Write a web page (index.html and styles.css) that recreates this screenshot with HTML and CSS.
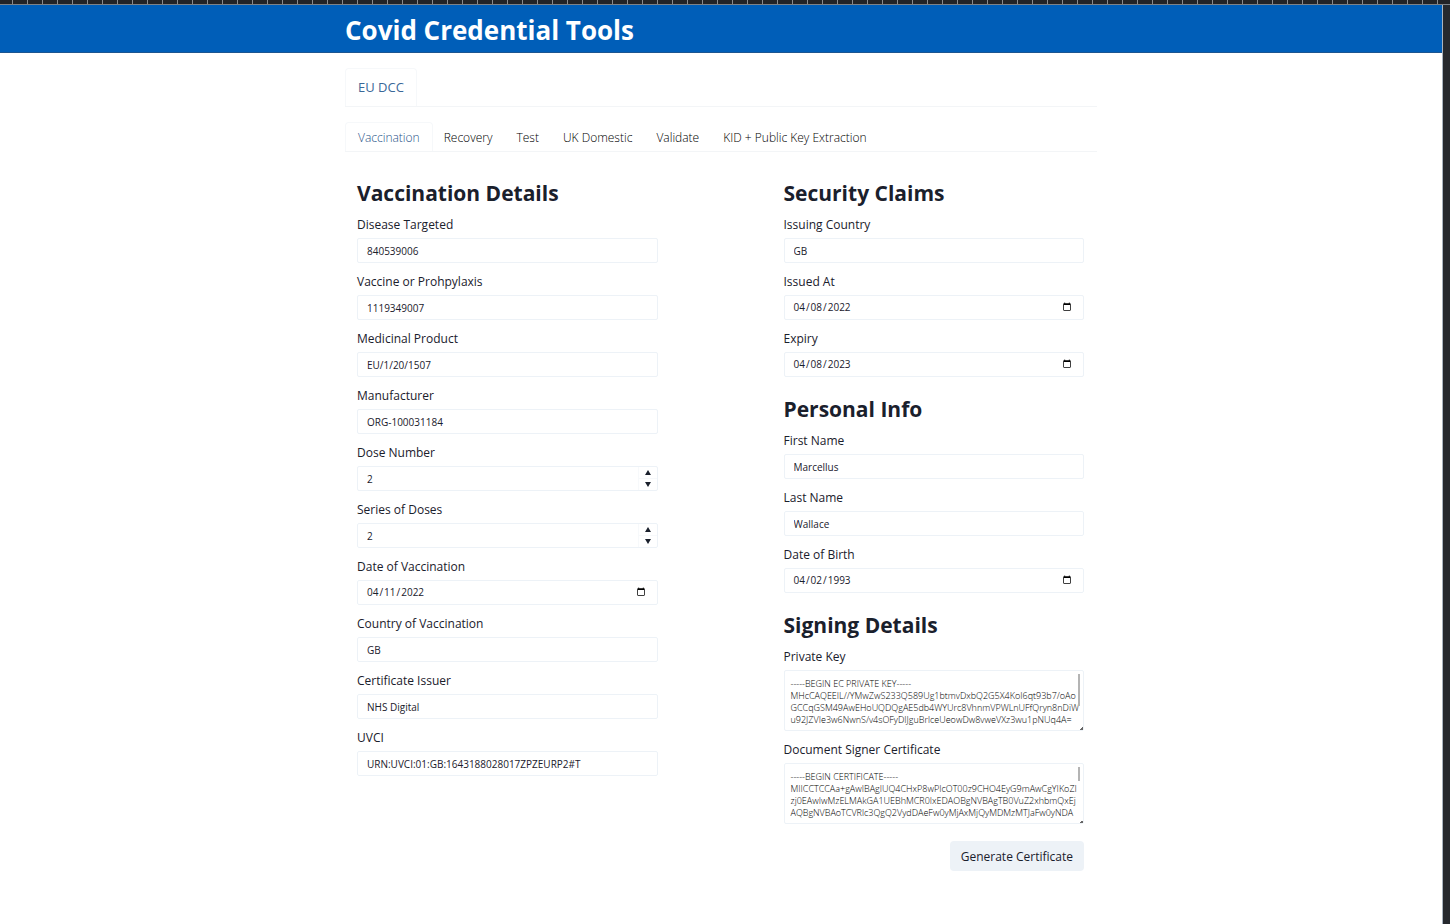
FILE: index.html
```html
<!DOCTYPE html>
<html lang="en">
<head>
<meta charset="utf-8">
<title>Covid Credential Tools</title>
<link rel="stylesheet" href="styles.css">
</head>
<body class="frame">
<div class="ruler"></div>
<div class="page">
  <header class="banner"><h1 class="wrap banner-title">Covid Credential Tools</h1></header>
  <main class="wrap">
    <nav class="tabs tabs-main"><a class="tab active" href="#dcc">EU DCC</a></nav>
    <nav class="tabs tabs-sub">
      <a class="tab active" href="#vaccination">Vaccination</a>
      <a class="tab" href="#recovery">Recovery</a>
      <a class="tab" href="#test">Test</a>
      <a class="tab" href="#domestic">UK Domestic</a>
      <a class="tab" href="#validate">Validate</a>
      <a class="tab" href="#kid">KID + Public Key Extraction</a>
    </nav>
    <form class="columns">
      <div class="column">
        <section class="group">
          <h2 class="heading">Vaccination Details</h2>
          <div class="field"><label for="disease">Disease Targeted</label><input id="disease" class="box" type="text" value="840539006"></div>
          <div class="field"><label for="vaccine">Vaccine or Prohpylaxis</label><input id="vaccine" class="box" type="text" value="1119349007"></div>
          <div class="field"><label for="product">Medicinal Product</label><input id="product" class="box" type="text" value="EU/1/20/1507"></div>
          <div class="field"><label for="maker">Manufacturer</label><input id="maker" class="box" type="text" value="ORG-100031184"></div>
          <div class="field"><label for="dose">Dose Number</label>
            <div class="holder"><input id="dose" class="box" type="number" value="2">
              <div class="stepper"><button class="step" type="button" aria-label="Increase dose number"><svg viewBox="0 0 6 5"><path d="M3 0 6 5H0Z"/></svg></button><button class="step" type="button" aria-label="Decrease dose number"><svg viewBox="0 0 6 5"><path d="M0 0H6L3 5Z"/></svg></button></div></div></div>
          <div class="field"><label for="series">Series of Doses</label>
            <div class="holder"><input id="series" class="box" type="number" value="2">
              <div class="stepper"><button class="step" type="button" aria-label="Increase series of doses"><svg viewBox="0 0 6 5"><path d="M3 0 6 5H0Z"/></svg></button><button class="step" type="button" aria-label="Decrease series of doses"><svg viewBox="0 0 6 5"><path d="M0 0H6L3 5Z"/></svg></button></div></div></div>
          <div class="field"><label for="vdate">Date of Vaccination</label><input id="vdate" class="box" type="date" value="2022-04-11"></div>
          <div class="field"><label for="country">Country of Vaccination</label><input id="country" class="box" type="text" value="GB"></div>
          <div class="field"><label for="issuer">Certificate Issuer</label><input id="issuer" class="box" type="text" value="NHS Digital"></div>
          <div class="field"><label for="uvci">UVCI</label><input id="uvci" class="box" type="text" value="URN:UVCI:01:GB:1643188028017ZPZEURP2#T"></div>
        </section>
      </div>
      <div class="column">
        <section class="group">
          <h2 class="heading">Security Claims</h2>
          <div class="field"><label for="issuing">Issuing Country</label><input id="issuing" class="box" type="text" value="GB"></div>
          <div class="field"><label for="issued">Issued At</label><input id="issued" class="box" type="date" value="2022-04-08"></div>
          <div class="field"><label for="expiry">Expiry</label><input id="expiry" class="box" type="date" value="2023-04-08"></div>
        </section>
        <section class="group">
          <h2 class="heading">Personal Info</h2>
          <div class="field"><label for="first">First Name</label><input id="first" class="box" type="text" value="Marcellus"></div>
          <div class="field"><label for="last">Last Name</label><input id="last" class="box" type="text" value="Wallace"></div>
          <div class="field"><label for="dob">Date of Birth</label><input id="dob" class="box" type="date" value="1993-04-02"></div>
        </section>
        <section class="group">
          <h2 class="heading">Signing Details</h2>
          <div class="field"><label for="key">Private Key</label>
            <div class="holder"><textarea id="key" class="box area" wrap="off">-----BEGIN EC PRIVATE KEY-----
MHcCAQEEIL//YMwZwS233Q589Ug1btmvDxbQ2G5X4KoI6qt93b7/oAo
GCCqGSM49AwEHoUQDQgAE5db4WYUrc8VhnmVPWLnUFfQryn8nDiW
u92JZVIe3w6NwnS/v4sOFyDIJguBrlceUeowDw8vweVXz3wu1pNUq4A=</textarea><span class="thumb thumb-long"></span><span class="grip"></span></div></div>
          <div class="field"><label for="cert">Document Signer Certificate</label>
            <div class="holder"><textarea id="cert" class="box area" wrap="off">-----BEGIN CERTIFICATE-----
MIICCTCCAa+gAwIBAgIUQ4CHxP8wPIcOT00z9CHO4EyG9mAwCgYIKoZI
zj0EAwIwMzELMAkGA1UEBhMCR0IxEDAOBgNVBAgTB0VuZ2xhbmQxEj
AQBgNVBAoTCVRlc3QgQ2VydDAeFw0yMjAxMjQyMDMzMTJaFw0yNDA</textarea><span class="thumb"></span><span class="grip"></span></div></div>
        </section>
        <button class="generate" type="button">Generate Certificate</button>
      </div>
    </form>
  </main>
</div>
<div class="edge"></div>
</body>
</html>
```
FILE: styles.css
```css
* { box-sizing: border-box; }
.frame {
  margin: 0;
  min-height: 100vh;
  display: grid;
  grid-template-columns: 1fr 8px;
  grid-template-rows: 5px 1fr;
  background: #fff;
  color: #1a202c;
  font-family: "Open Sans", "Noto Sans", sans-serif;
  font-size: 12px;
}
.ruler {
  grid-column: 1 / -1;
  border-bottom: 1px solid #7d8288;
  background: repeating-linear-gradient(90deg, #222327 0 12px, #8b8b8d 12px 13px, #222327 13px 15px);
}
.edge { background: #26292e; border-left: 1px solid #a9b4c0; }
.wrap { width: 100%; max-width: 752px; margin: 0 auto; }
.banner { background: #005eb8; border-bottom: 1px solid #1c5590; }
.banner-title { padding-top: 4px; font-size: 26px; line-height: 43px; font-weight: 700; color: #fff; }
.tabs { display: flex; border-bottom: 1px solid #f3f5f7; margin-top: 15px; }
.tab {
  margin-right: -2px;
  padding: 0 12px;
  border: 1px solid transparent;
  border-bottom: 0;
  border-radius: 4px 4px 0 0;
  color: #1a202c;
  text-decoration: none;
}
.tab.active { color: #3a6898; border-color: #f6f8fa; }
.tabs-main .tab { font-size: 13px; line-height: 37px; font-weight: 500; }
.tabs-sub .tab { padding-top: 2px; line-height: 26px; font-weight: 300; color: #000; }
.tabs-sub .tab.active { color: #1f5288; }
.columns { display: grid; grid-template-columns: 1fr 1fr; gap: 126px; padding: 24px 13px 24px 12px; }
.column { display: flex; flex-direction: column; gap: 15px; min-width: 0; }
.group { display: flex; flex-direction: column; gap: 9px; }
.heading { margin: 0 0 -4px; font-size: 21px; line-height: 34px; font-weight: 700; }
.field { display: flex; flex-direction: column; gap: 3px; }
.field label { line-height: 20px; font-weight: 400; }
.holder { position: relative; display: flex; }
.box {
  width: 100%;
  height: 25px;
  margin: 0;
  padding: 0 9px;
  border: 1px solid #edf2f7;
  border-radius: 2px;
  background: #fff;
  color: #1a202c;
  font-family: inherit;
  font-size: 10px;
  font-weight: 400;
  outline: 0;
}
.box[type="number"] { appearance: textfield; }
.box[type="number"]::-webkit-inner-spin-button { display: none; }
.box[type="date"] { padding: 0 9px 1px 8px; }
.box::-webkit-calendar-picker-indicator { width: 10px; height: 10px; padding: 0; margin-right: 2px; }
.stepper { position: absolute; inset: 1px 1px 1px auto; width: 19px; display: flex; flex-direction: column; border-left: 1px solid #f7f9fb; }
.step { flex: 1; display: flex; align-items: center; justify-content: center; padding: 0; border: 0; background: none; }
.step + .step { border-top: 1px solid #f7f9fb; }
.step svg { width: 6px; height: 5px; fill: #1a202c; }
.area { height: 61px; padding: 7px 6px 4px; font-size: 9px; line-height: 12px; font-weight: 300; color: #000; overflow: hidden; resize: none; }
.thumb { position: absolute; top: 4px; right: 4px; width: 2px; height: 14px; background: #b4b4b4; }
.thumb-long { height: 32px; }
.grip { position: absolute; right: 1px; bottom: 1px; width: 3px; height: 3px; background: linear-gradient(135deg, transparent 50%, #666 50%); }
.generate {
  align-self: flex-end;
  margin-top: 2px;
  height: 30px;
  padding: 0 11px;
  border: 0;
  border-radius: 4px;
  background: #edf2f7;
  color: #1a202c;
  font: 500 12px "Open Sans", "Noto Sans", sans-serif;
}
```
